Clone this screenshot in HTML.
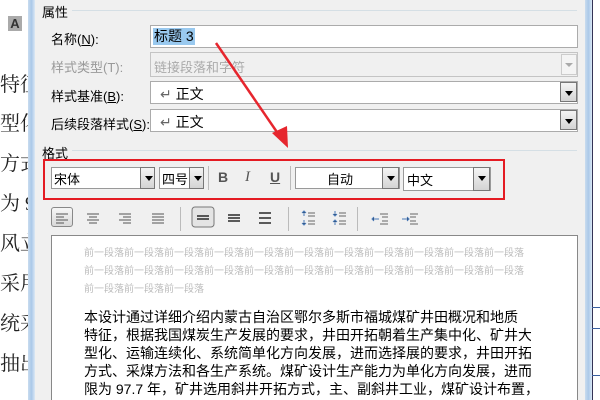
<!DOCTYPE html>
<html style="width:600px;height:400px;overflow:hidden"><head><meta charset="utf-8"><style>
*{margin:0;padding:0;box-sizing:border-box}
body{width:600px;height:400px;overflow:hidden;background:#fff;position:relative;font-family:"Liberation Sans","Microsoft YaHei","Noto Sans CJK SC",sans-serif;font-size:12px;color:#000}
.a{position:absolute}
.bg{font-family:"Liberation Serif","Noto Serif CJK SC",serif;font-size:20px;color:#222}
.dlg{left:35px;top:0;width:550px;height:400px;background:#f0f0f0}
.fr{background:linear-gradient(90deg,#c9dcef,#aac8e8,#dbe8f5)}
.lbl{font-size:13px}
.field{background:#fff;border:1px solid #ababab}
.dd{width:20px;height:20px;border:1px solid #777;background:linear-gradient(#f4f4f4,#d4d4d4)}
.dd:after{content:"";position:absolute;left:4px;top:8px;border-left:4px solid transparent;border-right:4px solid transparent;border-top:5px solid #000}
.sep{height:1px;background:#d5dfe5}
.vs{width:1px;height:24px;background:#bbb}
.pv{color:#bdbdbd;font-size:10px;line-height:12px}
.tx{font-size:14px;line-height:18px;font-family:"Liberation Sans","Noto Sans CJK SC",sans-serif;white-space:nowrap}
.tb{width:22px;height:20px;border-radius:3px}
.tb.on{border:1px solid #888;background:linear-gradient(#f6f6f6,#d9d9d9)}
</style></head><body>
<div class="a bg" style="left:0;top:0;width:35px;height:400px;background:#fff"></div>
<div class="a" style="left:8px;top:16px;width:14px;height:15px;background:#aaa;color:#333;font-weight:bold;font-size:13px;text-align:center;line-height:15px">A</div>
<div class="a bg" style="left:0;top:68px">特征</div>
<div class="a bg" style="left:0;top:107px">型化</div>
<div class="a bg" style="left:0;top:147px">方式</div>
<div class="a bg" style="left:0;top:187px">为 9</div>
<div class="a bg" style="left:0;top:227px">风立</div>
<div class="a bg" style="left:0;top:267px">采用</div>
<div class="a bg" style="left:0;top:307px">统采</div>
<div class="a bg" style="left:0;top:347px">抽出</div>
<div class="a fr" style="left:28px;top:0;width:7px;height:400px"></div>
<div class="a fr" style="left:585px;top:0;width:7px;height:400px"></div>
<div class="a" style="left:592px;top:0;width:8px;height:400px;background:#fff;border-left:1px solid #335"></div>
<div class="a" style="left:592px;top:307px;width:8px;height:1px;background:#3a5fa0"></div>
<div class="a" style="left:592px;top:328px;width:8px;height:1px;background:#3a5fa0"></div>
<div class="a" style="left:592px;top:375px;width:8px;height:1px;background:#3a5fa0"></div>
<div class="a dlg"></div>
<div class="a lbl" style="left:42px;top:2px">属性</div>
<div class="a sep" style="left:72px;top:10px;width:505px"></div>
<div class="a lbl" style="left:51px;top:29px">名称(<u>N</u>):</div>
<div class="a field" style="left:150px;top:25px;width:428px;height:23px"></div>
<div class="a" style="left:153px;top:28px;background:#99c9ef;font-size:14px;padding:0 1px;line-height:17px">标题 3</div>
<div class="a lbl" style="left:51px;top:57px;color:#999">样式类型(T):</div>
<div class="a" style="left:150px;top:52px;width:428px;height:25px;border:1px solid #c4c4c4;background:#f0f0f0"></div>
<div class="a" style="left:154px;top:57px;color:#aaa;font-size:13px">链接段落和字符</div>
<div class="a" style="left:561px;top:54px;width:16px;height:21px;border:1px solid #ccc;background:#f4f4f4"></div>
<div class="a" style="left:565px;top:63px;border-left:4px solid transparent;border-right:4px solid transparent;border-top:4px solid #aaa"></div>
<div class="a lbl" style="left:51px;top:86px">样式基准(<u>B</u>):</div>
<div class="a field" style="left:150px;top:81px;width:428px;height:23px"></div>
<div class="a" style="left:160px;top:84px;font-size:14px"><span style="color:#666">↵</span> 正文</div>
<div class="a dd" style="left:560px;top:82px;width:17px"></div>
<div class="a lbl" style="left:51px;top:114px">后续段落样式(<u>S</u>):</div>
<div class="a field" style="left:150px;top:109px;width:428px;height:23px"></div>
<div class="a" style="left:160px;top:112px;font-size:14px"><span style="color:#666">↵</span> 正文</div>
<div class="a dd" style="left:560px;top:110px;width:17px"></div>
<div class="a lbl" style="left:42px;top:143px">格式</div>
<div class="a sep" style="left:72px;top:150px;width:505px"></div>
<div class="a" style="left:43px;top:159px;width:462px;height:41px;border:2px solid #e41b23"></div>
<div class="a field" style="left:51px;top:167px;width:104px;height:22px;border-color:#999"></div>
<div class="a" style="left:54px;top:169px;font-size:13px">宋体</div>
<div class="a dd" style="left:140px;top:167px;width:15px;height:22px"></div>
<div class="a field" style="left:159px;top:167px;width:45px;height:22px;border-color:#999"></div>
<div class="a" style="left:162px;top:169px;font-size:13px">四号</div>
<div class="a dd" style="left:189px;top:167px;width:15px;height:22px"></div>
<div class="a vs" style="left:208px;top:166px"></div>
<div class="a" style="left:218px;top:169px;font-weight:bold;color:#555;font-size:14px">B</div>
<div class="a" style="left:245px;top:169px;font-style:italic;color:#555;font-size:15px;font-family:'Liberation Serif',serif">I</div>
<div class="a" style="left:270px;top:169px;text-decoration:underline;color:#555;font-weight:bold;font-size:14px">U</div>
<div class="a vs" style="left:290px;top:166px"></div>
<div class="a field" style="left:295px;top:167px;width:105px;height:22px;border-color:#999"></div>
<div class="a" style="left:327px;top:169px;font-size:13px">自动</div>
<div class="a dd" style="left:382px;top:167px;width:17px;height:22px"></div>
<div class="a field" style="left:403px;top:167px;width:88px;height:24px;border-color:#999"></div>
<div class="a" style="left:407px;top:170px;font-size:13px">中文</div>
<div class="a dd" style="left:473px;top:167px;width:17px;height:24px"></div>
<div class="a tb on" style="left:51px;top:207px"></div>
<svg class="a" style="left:0;top:0" width="600" height="400">
<g stroke="#555" stroke-width="1">
<path d="M56 214h12M56 217h8M56 220h12M56 223h8"/>
<path d="M87 214h12M89 217h8M87 220h12M89 223h8"/>
<path d="M119 214h12M123 217h8M119 220h12M123 223h8"/>
<path d="M152 214h12M152 217h12M152 220h12M152 223h12"/>
</g>
<rect x="192" y="207" width="22" height="20" rx="3" fill="#e4e4e4" stroke="#777"/>
<g stroke="#000" stroke-width="1.2"><path d="M197 216h12M197 219h12"/><path d="M228 215h12M228 218h12M228 221h12"/><path d="M259 213h12M259 218h12M259 223h12"/></g>
<g stroke="#4a7ab8" stroke-width="1"><path d="M304 211v5M302 213l2-2 2 2M304 220v5M302 223l2 2 2-2"/><path d="M335 211v5M333 214l2 2 2-2M335 220v5M333 222l2-2 2 2"/>
<path d="M372 219h7M374 217l-2 2 2 2"/><path d="M402 219h7M407 217l2 2-2 2"/></g>
<g stroke="#666"><path d="M308 213h7M308 216h7M308 221h7M308 224h7M339 213h7M339 216h7M339 221h7M339 224h7M380 214h8M382 217h6M382 221h6M380 224h8M410 214h8M410 217h6M410 221h6M410 224h8"/></g>
<path d="M216 43L281 138" stroke="#e6262e" stroke-width="2.5"/>
<path d="M288 148L272 133L287 126Z" fill="#e6262e"/>
</svg>
<div class="a vs" style="left:180px;top:207px"></div>
<div class="a vs" style="left:288px;top:207px"></div>
<div class="a vs" style="left:357px;top:207px"></div>
<div class="a" style="left:51px;top:235px;width:527px;height:165px;background:#fff;border:1px solid #888;border-bottom:none"></div>
<div class="a pv" style="left:84px;top:248px">前一段落前一段落前一段落前一段落前一段落前一段落前一段落前一段落前一段落前一段落前一段落</div>
<div class="a pv" style="left:84px;top:266px">前一段落前一段落前一段落前一段落前一段落前一段落前一段落前一段落前一段落前一段落前一段落</div>
<div class="a pv" style="left:84px;top:284px">前一段落前一段落前一段落</div>
<div class="a" style="left:84px;top:308px;width:447px;height:92px;overflow:hidden">
<div class="tx">本设计通过详细介绍内蒙古自治区鄂尔多斯市福城煤矿井田概况和地质</div>
<div class="tx">特征，根据我国煤炭生产发展的要求，井田开拓朝着生产集中化、矿井大</div>
<div class="tx">型化、运输连续化、系统简单化方向发展，进而选择展的要求，井田开拓</div>
<div class="tx">方式、采煤方法和各生产系统。煤矿设计生产能力为单化方向发展，进而</div>
<div class="tx">限为 97.7 年，矿井选用斜井开拓方式，主、副斜井工业，煤矿设计布置，</div>
</div>
</body></html>
